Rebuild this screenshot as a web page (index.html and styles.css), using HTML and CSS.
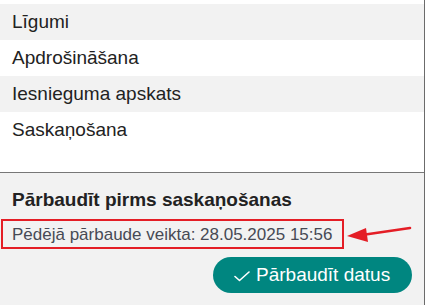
FILE: index.html
```html
<!DOCTYPE html>
<html lang="lv">
<head>
<meta charset="utf-8">
<title>Saskaņošana</title>
<link rel="stylesheet" href="styles.css">
</head>
<body>
<div class="page">
  <ul class="menu">
    <li class="menu-item alt">Līgumi</li>
    <li class="menu-item">Apdrošināšana</li>
    <li class="menu-item alt">Iesnieguma apskats</li>
    <li class="menu-item">Saskaņošana</li>
  </ul>
  <section class="check-panel">
    <h2 class="check-title">Pārbaudīt pirms saskaņošanas</h2>
    <p class="last-check"><span class="highlight">Pēdējā pārbaude veikta: 28.05.2025 15:56</span></p>
    <div class="actions">
      <button class="btn-check" type="button">
        <svg class="check-icon" width="16" height="11" viewBox="0 0 16 11"><polyline points="1,5.5 5.5,9.5 15,1" fill="none" stroke="#fff" stroke-width="1.6" stroke-linecap="round" stroke-linejoin="round"/></svg>
        <span>Pārbaudīt datus</span>
      </button>
    </div>
    <svg class="annot-arrow" width="70" height="20" viewBox="0 0 70 20">
      <line x1="16" y1="11" x2="64" y2="4" stroke="#e41e26" stroke-width="2.6" stroke-linecap="round"/>
      <polygon points="1,12 20,4 22,18" fill="#e41e26"/>
    </svg>
  </section>
</div>
</body>
</html>
```
FILE: styles.css
```css
html, body {
  margin: 0;
  padding: 0;
  background: #ffffff;
}
body {
  font-family: "Liberation Sans", Arial, sans-serif;
  color: #222222;
}
.page {
  width: 425px;
  height: 305px;
  border-right: 1px solid #6b6b6b;
  padding-top: 4px;
  box-sizing: border-box;
  display: flex;
  flex-direction: column;
  overflow: hidden;
}
.menu {
  list-style: none;
  margin: 0 0 24px 0;
  padding: 0;
}
.menu-item {
  height: 36px;
  line-height: 36px;
  padding-left: 12px;
  font-size: 19px;
  color: #222222;
}
.menu-item.alt {
  background: #f2f2f2;
}
.check-panel {
  position: relative;
  flex: 1;
  background: #f2f2f2;
  border-top: 1px solid #777777;
  padding: 16px 12px 0 0;
}
.check-title {
  margin: 0 0 8px 12px;
  font-size: 19px;
  line-height: 22px;
  font-weight: bold;
  color: #222222;
}
.last-check {
  margin: 0 0 8px 1px;
}
.highlight {
  display: inline-block;
  border: 2px solid #e41e26;
  padding: 0 10px 0 9px;
  height: 26px;
  line-height: 27px;
  font-size: 17px;
  color: #474a55;
}
.actions {
  display: flex;
  justify-content: flex-end;
}
.btn-check {
  display: flex;
  align-items: center;
  gap: 6px;
  height: 36px;
  width: 199px;
  padding: 0 0 0 21px;
  border: none;
  border-radius: 18px;
  background: #008680;
  color: #ffffff;
  font-family: "Liberation Sans", Arial, sans-serif;
  font-size: 19px;
  cursor: pointer;
}
.check-icon {
  display: block;
  margin-top: 3px;
}
.annot-arrow {
  position: absolute;
  left: 346px;
  top: 51px;
}
```
